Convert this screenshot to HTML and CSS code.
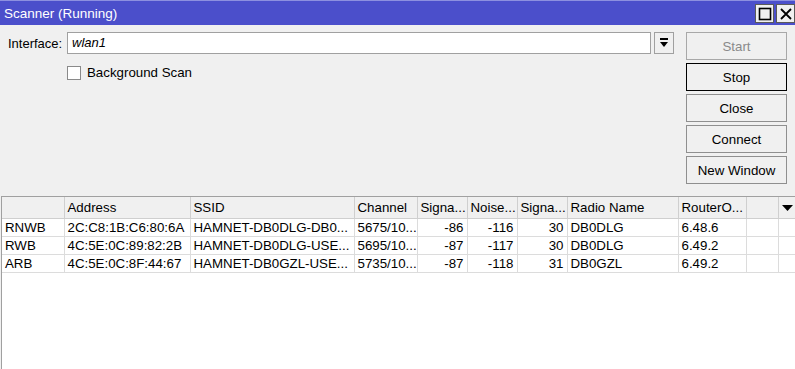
FILE: index.html
```html
<!DOCTYPE html>
<html>
<head>
<meta charset="utf-8">
<link rel="stylesheet" href="styles.css">
</head>
<body>
<div class="window">
  <div class="titlebar">
    <span class="title">Scanner (Running)</span>
    <div class="winbtns">
      <span class="wbtn"><svg width="16" height="16" viewBox="0 0 16 16"><rect x="2.5" y="2.5" width="11" height="11" fill="none" stroke="#000" stroke-width="1.6"/></svg></span>
      <span class="wbtn"><svg width="16" height="16" viewBox="0 0 16 16"><path d="M3 3 L13 13 M13 3 L3 13" stroke="#000" stroke-width="1.8"/></svg></span>
    </div>
  </div>
  <div class="top">
    <div class="form">
      <div class="row">
        <label class="lbl">Interface:</label>
        <div class="input">wlan1</div>
        <div class="dd"><svg width="10" height="12" viewBox="0 0 10 12"><rect x="1" y="1" width="8" height="2" fill="#000"/><path d="M1 5 H9 L5 10 Z" fill="#000"/></svg></div>
      </div>
      <div class="row check">
        <span class="box"></span>
        <span class="cbtext">Background Scan</span>
      </div>
    </div>
    <div class="buttons">
      <div class="btn disabled">Start</div>
      <div class="btn focused">Stop</div>
      <div class="btn">Close</div>
      <div class="btn">Connect</div>
      <div class="btn">New Window</div>
    </div>
  </div>
  <div class="tablewrap">
    <table class="grid">
      <thead>
        <tr>
          <th class="c1"></th>
          <th class="c2">Address</th>
          <th class="c3">SSID</th>
          <th class="c4">Channel</th>
          <th class="c5">Signa...</th>
          <th class="c6">Noise...</th>
          <th class="c7">Signa...</th>
          <th class="c8">Radio Name</th>
          <th class="c9">RouterO...</th>
          <th class="c10"></th>
          <th class="c11"><svg width="11" height="7" viewBox="0 0 11 7"><path d="M0 0 H11 L5.5 6 Z" fill="#000"/></svg></th>
        </tr>
      </thead>
      <tbody>
        <tr><td>RNWB</td><td>2C:C8:1B:C6:80:6A</td><td>HAMNET-DB0DLG-DB0...</td><td>5675/10...</td><td class="num">-86</td><td class="num">-116</td><td class="num">30</td><td>DB0DLG</td><td>6.48.6</td><td></td><td class="last"></td></tr>
        <tr><td>RWB</td><td>4C:5E:0C:89:82:2B</td><td>HAMNET-DB0DLG-USE...</td><td>5695/10...</td><td class="num">-87</td><td class="num">-117</td><td class="num">30</td><td>DB0DLG</td><td>6.49.2</td><td></td><td class="last"></td></tr>
        <tr><td>ARB</td><td>4C:5E:0C:8F:44:67</td><td>HAMNET-DB0GZL-USE...</td><td>5735/10...</td><td class="num">-87</td><td class="num">-118</td><td class="num">31</td><td>DB0GZL</td><td>6.49.2</td><td></td><td class="last"></td></tr>
      </tbody>
    </table>
  </div>
</div>
</body>
</html>
```

FILE: styles.css
```css
* { box-sizing: border-box; }
html, body { margin: 0; padding: 0; }
body {
  width: 795px;
  height: 369px;
  overflow: hidden;
  background: #f0f0f0;
  font-family: "Liberation Sans", Arial, sans-serif;
  font-size: 13px;
  color: #000;
}
.window { display: flex; flex-direction: column; height: 369px; }
.titlebar {
  height: 25px;
  background: #4b4fcb;
  border-top: 1px solid #8d90e0;
  display: flex;
  align-items: center;
  justify-content: space-between;
  padding-left: 4px;
}
.title { color: #fff; font-size: 13.5px; }
.winbtns { display: flex; gap: 2px; align-self: flex-start; margin-top: 3px; }
.wbtn {
  width: 19px; height: 19px;
  background: #f0f0f0;
  border: 1px solid #5a5a5a;
  display: flex; align-items: center; justify-content: center;
}
.top { display: flex; padding: 7px 8px 0 8px; height: 171px; }
.form { flex: 1; display: flex; flex-direction: column; }
.row { display: flex; align-items: center; }
.lbl { width: 59px; }
.input {
  width: 584px; height: 22px;
  background: #fff;
  border: 1px solid #a0a0a0;
  font-style: italic;
  padding: 2px 4px;
  line-height: 16px;
}
.dd {
  width: 20px; height: 22px; margin-left: 3px;
  border: 1px solid #a0a0a0;
  background: #f0f0f0;
  display: flex; align-items: center; justify-content: center;
}
.check { margin-top: 11px; padding-left: 59px; }
.box { width: 14px; height: 14px; background: #fff; border: 1px solid #8a8a8a; }
.cbtext { margin-left: 6px; font-size: 13.3px; }
.buttons { width: 102px; margin-left: 12px; display: flex; flex-direction: column; gap: 3px; }
.btn {
  height: 28px;
  border: 1px solid #8f8f8f;
  background: #f0f0f0;
  display: flex; align-items: center; justify-content: center;
  font-size: 13.3px;
}
.btn.disabled { color: #8a8a8a; border-color: #a8a8a8; }
.btn.focused { border-color: #000; }
.tablewrap {
  flex: 1;
  margin-left: 1px;
  border: 1px solid #a0a0a0;
  border-right: none;
  border-bottom: none;
  background: #fff;
  overflow: hidden;
}
.grid { border-collapse: collapse; table-layout: fixed; width: 794px; font-size: 13.3px; }
.grid th {
  height: 21px;
  background: #f0f0f0;
  font-weight: normal;
  text-align: left;
  padding: 0 2px 0 3px;
  border-right: 1px solid #cfcfcf;
  border-bottom: 1px solid #cfcfcf;
  white-space: nowrap;
  overflow: hidden;
}
.grid td {
  height: 18px;
  padding: 0 3px 0 3px;
  border-right: 1px solid #dcdcdc;
  border-bottom: 1px solid #dcdcdc;
  white-space: nowrap;
  overflow: hidden;
}
.grid td.num { text-align: right; }
.grid td.last, .grid th.c11 { border-right: none; }
.c1 { width: 62px; }
.c2 { width: 126px; }
.c3 { width: 164px; }
.c4 { width: 63px; }
.c5 { width: 50px; }
.c6 { width: 50px; }
.c7 { width: 50px; }
.c8 { width: 111px; }
.c9 { width: 68px; }
.c10 { width: 32px; }
.c11 { width: 18px; text-align: center !important; }
```
